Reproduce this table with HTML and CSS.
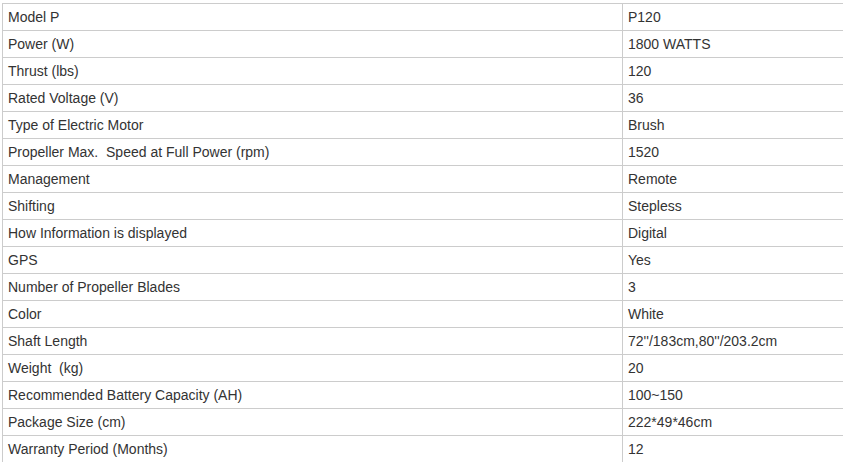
FILE: index.html
```html
<!DOCTYPE html>
<html>
<head>
<meta charset="utf-8">
<link rel="stylesheet" href="styles.css">
</head>
<body>
<div class="wrap">
<table class="spec">
<tbody>
<tr><td class="k">Model P</td><td class="v">P120</td></tr>
<tr><td class="k">Power (W)</td><td class="v">1800 WATTS</td></tr>
<tr><td class="k">Thrust (lbs)</td><td class="v">120</td></tr>
<tr><td class="k">Rated Voltage (V)</td><td class="v">36</td></tr>
<tr><td class="k">Type of Electric Motor</td><td class="v">Brush</td></tr>
<tr><td class="k">Propeller Max.&nbsp; Speed at Full Power (rpm)</td><td class="v">1520</td></tr>
<tr><td class="k">Management</td><td class="v">Remote</td></tr>
<tr><td class="k">Shifting</td><td class="v">Stepless</td></tr>
<tr><td class="k">How Information is displayed</td><td class="v">Digital</td></tr>
<tr><td class="k">GPS</td><td class="v">Yes</td></tr>
<tr><td class="k">Number of Propeller Blades</td><td class="v">3</td></tr>
<tr><td class="k">Color</td><td class="v">White</td></tr>
<tr><td class="k">Shaft Length</td><td class="v">72''/183cm,80''/203.2cm</td></tr>
<tr><td class="k">Weight&nbsp; (kg)</td><td class="v">20</td></tr>
<tr><td class="k">Recommended Battery Capacity (AH)</td><td class="v">100~150</td></tr>
<tr><td class="k">Package Size (cm)</td><td class="v">222*49*46cm</td></tr>
<tr><td class="k">Warranty Period (Months)</td><td class="v">12</td></tr>
</tbody>
</table>
</div>
</body>
</html>
```
FILE: styles.css
```css
html, body {
  margin: 0;
  padding: 0;
  background: #fff;
}
.wrap {
  padding: 3px 0 0 2px;
  overflow: hidden;
  width: 841px;
}
.spec {
  border-collapse: collapse;
  width: 860px;
  table-layout: fixed;
  font-family: "Liberation Sans", Arial, sans-serif;
  font-size: 14px;
  color: #333;
}
.spec td {
  border: 1px solid #ccc;
  padding: 0 5px;
  box-sizing: border-box;
  height: 27px;
  vertical-align: middle;
  white-space: nowrap;
}
.spec .k {
  width: 620px;
}
```
